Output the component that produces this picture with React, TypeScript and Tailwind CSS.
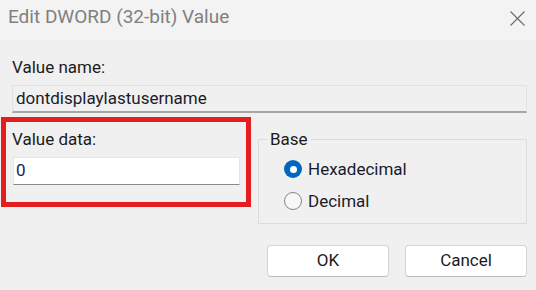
import React from "react";

const font = { fontFamily: "Roboto, 'Noto Sans', Arial, sans-serif" };

function Radio({ checked, label }: { checked?: boolean; label: string }) {
  return (
    <div className="flex h-[20px] items-center">
      {checked ? (
        <span className="flex h-[18px] w-[18px] items-center justify-center rounded-full bg-[#0067c0]">
          <span className="h-[7px] w-[7px] rounded-full bg-white" />
        </span>
      ) : (
        <span className="h-[18px] w-[18px] rounded-full border border-[#858585] bg-[#f7f7f7]" />
      )}
      <span className="ml-[6px] text-[17px] leading-[20px] text-[#1b1b2b]">{label}</span>
    </div>
  );
}

export default function App() {
  return (
    <div className="h-[290px] w-[536px] overflow-hidden bg-[#f0f0f0]" style={font}>
      {/* title bar */}
      <div className="flex h-[40px] items-start justify-between bg-[#f3f3f3] pl-[8px] pr-[11px] pt-[6px]">
        <span className="text-[19px] leading-[22px] text-[#808080]">Edit DWORD (32-bit) Value</span>
        <svg width="15" height="15" viewBox="0 0 15 15" className="mt-[5px]">
          <path d="M0.5 0.5 L14.5 14.5 M14.5 0.5 L0.5 14.5" stroke="#6b6b6b" strokeWidth="1.1" fill="none" />
        </svg>
      </div>

      <div className="pr-[9px]">
        <div className="ml-[12px] mt-[17px] text-[17px] leading-[20px] text-[#1b1b1b]">Value name:</div>
        <div className="ml-[12px] mt-[8px] flex h-[28px] items-center border border-[#e2e2e2] border-b-2 border-b-[#a6a6a6] bg-[#f0f0f0] pl-[3px] text-[17px] text-[#1b1b2b]">
          dontdisplaylastusername
        </div>

        <div className="mt-[4px] flex items-start">
          <div className="ml-[1px] w-[250px] border-[5px] border-[#e41e1e] pb-[17px] pt-[7px]">
            <div className="ml-[6px] text-[17px] leading-[20px] text-[#1b1b1b]">Value data:</div>
            <div className="ml-[7px] mt-[8px] flex h-[28px] w-[227px] items-center border border-[#e6e6e6] border-b-[#8a8a8a] bg-white pl-[2px] text-[17px] text-[#1b1b4b]">
              0
            </div>
          </div>

          <div className="relative ml-[7px] mt-[22px] h-[85px] w-[269px] border border-[#dcdcdc] pl-[25px] pt-[19px]">
            <span className="absolute left-[8px] top-[-11px] bg-[#f0f0f0] px-[3px] text-[17px] leading-[20px] text-[#1b1b1b]">
              Base
            </span>
            <div className="flex flex-col gap-[12px]">
              <Radio checked label="Hexadecimal" />
              <Radio label="Decimal" />
            </div>
          </div>
        </div>

        <div className="mt-[21px] flex justify-end gap-[16px]">
          <button className="h-[32px] w-[122px] rounded-[4px] border border-[#d4d4d4] border-b-[#bcbcbc] bg-white text-[17px] text-[#1b1b1b]">
            OK
          </button>
          <button className="h-[32px] w-[122px] rounded-[4px] border border-[#d4d4d4] border-b-[#bcbcbc] bg-white text-[17px] text-[#1b1b1b]">
            Cancel
          </button>
        </div>
      </div>
    </div>
  );
}
